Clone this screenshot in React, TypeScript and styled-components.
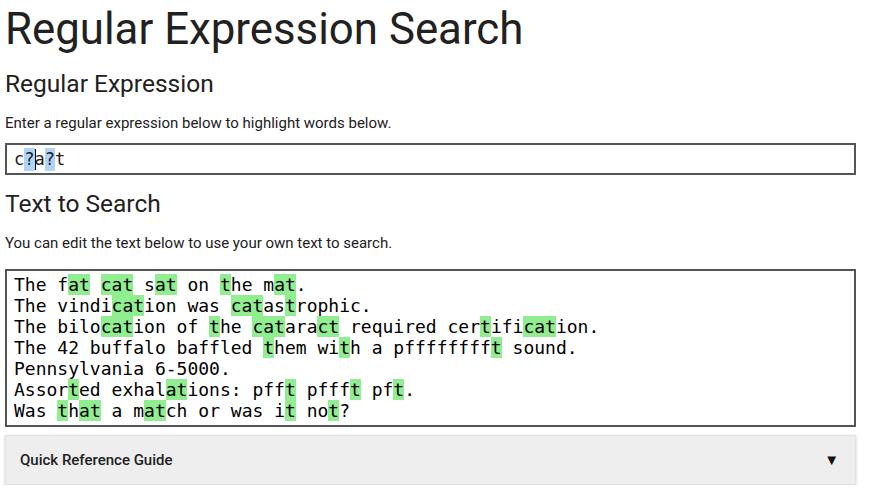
import React from "react";
import styled, { createGlobalStyle } from "styled-components";

const pattern = "c?a?t";

const sampleText = [
  "The fat cat sat on the mat.",
  "The vindication was catastrophic.",
  "The bilocation of the cataract required certification.",
  "The 42 buffalo baffled them with a pfffffffft sound.",
  "Pennsylvania 6-5000.",
  "Assorted exhalations: pfft pffft pft.",
  "Was that a match or was it not?",
];

const GlobalStyle = createGlobalStyle`
  body {
    margin: 0;
    background: #ffffff;
    color: #212121;
    font-family: Roboto, "Noto Sans", sans-serif;
    font-size: 15px;
  }
`;

const Page = styled.div`
  display: flex;
  flex-direction: column;
  padding: 0 15px 0 5px;
`;

const Title = styled.h1`
  margin: 0;
  font-size: 43.8px;
  font-weight: 400;
  line-height: 58px;
  color: #212121;
`;

const SectionTitle = styled.h2<{ $top: number }>`
  margin: ${({ $top }) => $top}px 0 0;
  font-size: 24.5px;
  font-weight: 400;
  line-height: 28px;
  color: #212121;
`;

const Hint = styled.p<{ $top: number; $bottom: number }>`
  margin: ${({ $top }) => $top}px 0 ${({ $bottom }) => $bottom}px;
  font-size: 15px;
  line-height: 17px;
  color: #212121;
`;

const RegexField = styled.div`
  display: flex;
  align-items: center;
  height: 28px;
  border: 2px solid #555555;
  padding: 0 7px;
  font-family: "DejaVu Sans Mono", monospace;
  font-size: 17px;
  color: #212121;
`;

const Token = styled.span<{ $meta?: boolean }>`
  display: inline-block;
  line-height: 23px;
  background: ${({ $meta }) => ($meta ? "#b0d4f8" : "transparent")};
`;

const Caret = styled.span`
  display: inline-block;
  width: 1px;
  height: 21px;
  background: #000000;
  margin: 0 -1px 0 0;
`;

const TextBox = styled.div`
  margin-top: 17px;
  border: 2px solid #555555;
  padding: 3px 7px 4px;
  font-family: "DejaVu Sans Mono", monospace;
  font-size: 18px;
  line-height: 21px;
  color: #000000;
  white-space: pre;
`;

const Line = styled.div`
  height: 21px;
`;

const Mark = styled.span`
  display: inline-block;
  background: #90ee90;
`;

const Accordion = styled.div`
  margin-top: 8px;
  display: flex;
  align-items: center;
  justify-content: space-between;
  height: 48px;
  padding: 0 16px 0 14px;
  background: #eeeeee;
  border: 1px solid #e2e2e2;
  box-shadow: 0 1px 3px rgba(0, 0, 0, 0.2);
  font-size: 15px;
  font-weight: 500;
  color: #212121;
`;

const Arrow = styled.span`
  font-size: 15px;
  color: #111111;
`;

const highlight = (line: string) => {
  const re = new RegExp(pattern, "g");
  const parts: React.ReactNode[] = [];
  let last = 0;
  let m: RegExpExecArray | null;
  while ((m = re.exec(line)) !== null) {
    if (m[0].length === 0) {
      re.lastIndex++;
      continue;
    }
    if (m.index > last) parts.push(line.slice(last, m.index));
    parts.push(<Mark key={m.index}>{m[0]}</Mark>);
    last = m.index + m[0].length;
  }
  if (last < line.length) parts.push(line.slice(last));
  return parts;
};

export default function App() {
  return (
    <>
      <GlobalStyle />
      <Page>
        <Title>Regular Expression Search</Title>
        <SectionTitle $top={12}>Regular Expression</SectionTitle>
        <Hint $top={17} $bottom={11}>
          Enter a regular expression below to highlight words below.
        </Hint>
        <RegexField>
          <Token>c</Token>
          <Token $meta>?</Token>
          <Caret />
          <Token>a</Token>
          <Token $meta>?</Token>
          <Token>t</Token>
        </RegexField>
        <SectionTitle $top={15}>Text to Search</SectionTitle>
        <Hint $top={17} $bottom={0}>
          You can edit the text below to use your own text to search.
        </Hint>
        <TextBox>
          {sampleText.map((line, i) => (
            <Line key={i}>{highlight(line)}</Line>
          ))}
        </TextBox>
        <Accordion>
          <span>Quick Reference Guide</span>
          <Arrow>▼</Arrow>
        </Accordion>
      </Page>
    </>
  );
}
